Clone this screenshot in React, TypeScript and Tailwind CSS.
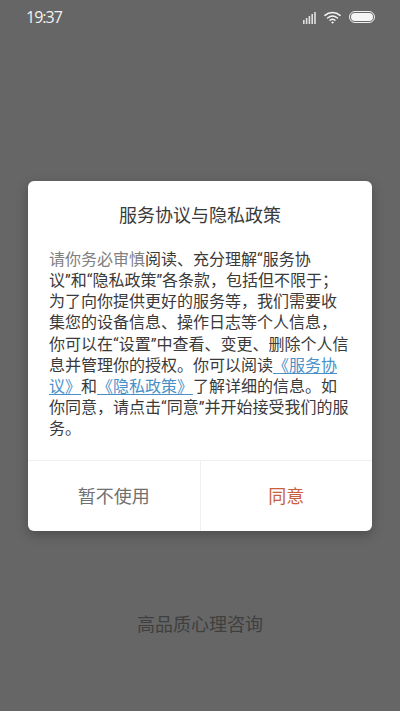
export default function App() {
  const font = { fontFamily: '"Noto Sans CJK SC", "Noto Sans", sans-serif' };
  const body = { fontFamily: 'Roboto, "Noto Sans CJK SC", sans-serif' };
  return (
    <div className="relative h-[711px] w-[400px] overflow-hidden bg-[#666666] flex flex-col" style={font}>
      <div className="h-[34px] flex items-center justify-between pl-[26px] pr-[25px] text-[#f2f2f2]">
        <span className="text-[16px] leading-none tracking-[-1px]" style={{ fontFamily: '"Open Sans", sans-serif' }}>19:37</span>
        <div className="flex items-center gap-[8px]">
          <svg width="13" height="13" viewBox="0 0 13 13" fill="#e0e0e0">
            <rect x="0" y="9" width="1.6" height="4" />
            <rect x="2.8" y="7" width="1.6" height="6" />
            <rect x="5.6" y="5" width="1.6" height="8" />
            <rect x="8.4" y="3" width="1.6" height="10" />
            <rect x="11.2" y="1" width="1.6" height="12" />
          </svg>
          <svg width="17" height="13" viewBox="0 0 18 13" fill="none" stroke="#f5f5f5" strokeWidth="1.6" strokeLinecap="round">
            <path d="M1 4.2C5.6 0.2 12.4 0.2 17 4.2" />
            <path d="M3.8 7C7 4.4 11 4.4 14.2 7" />
            <path d="M6.4 9.4C8 8.2 10 8.2 11.6 9.4" />
            <circle cx="9" cy="11.8" r="0.7" fill="#f5f5f5" strokeWidth="0.8" />
          </svg>
          <div className="flex h-[12px] w-[26px] items-center justify-center rounded-full border border-[#f0f0f0] p-px">
            <div className="h-full w-full rounded-full bg-[#f5f5f5]" />
          </div>
        </div>
      </div>

      <div className="ml-[28px] mt-[147px] flex h-[350px] w-[344px] flex-col rounded-[6px] bg-white shadow-[0_4px_12px_rgba(0,0,0,0.25)]">
        <h1 className="mt-[20px] text-center text-[18px] font-normal leading-[26px] text-[#3a3a3a]">服务协议与隐私政策</h1>
        <p className="mt-[22px] flex-1 whitespace-nowrap pl-[21px] text-[16px] leading-[21.15px] text-[#3a3a3a]" style={body}>
          <span className="text-[#808080]">请你务必审慎</span>阅读、充分理解“服务协<br />
          议”和“隐私政策”各条款，包括但不限于；<br />
          为了向你提供更好的服务等，我们需要收<br />
          集您的设备信息、操作日志等个人信息，<br />
          你可以在“设置”中查看、变更、删除个人信<br />
          息并管理你的授权。你可以阅读<a className="text-[#4a90c8] underline underline-offset-[2px]">《服务协</a><br />
          <a className="text-[#4a90c8] underline underline-offset-[2px]">议》</a>和<a className="text-[#4a90c8] underline underline-offset-[2px]">《隐私政策》</a>了解详细的信息。如<br />
          你同意，请点击“同意”并开始接受我们的服<br />
          务。
        </p>
        <div className="flex h-[71px] border-t border-[#f0f0f0]">
          <button className="flex flex-1 items-center justify-center border-r border-[#f0f0f0] pb-[1px] text-[18px] text-[#707070]">暂不使用</button>
          <button className="flex flex-1 items-center justify-center pb-[1px] text-[18px] text-[#c9613a]">同意</button>
        </div>
      </div>

      <div className="mt-[79px] text-center text-[18px] leading-[26px] text-[#3f3f3f]">高品质心理咨询</div>
    </div>
  );
}
